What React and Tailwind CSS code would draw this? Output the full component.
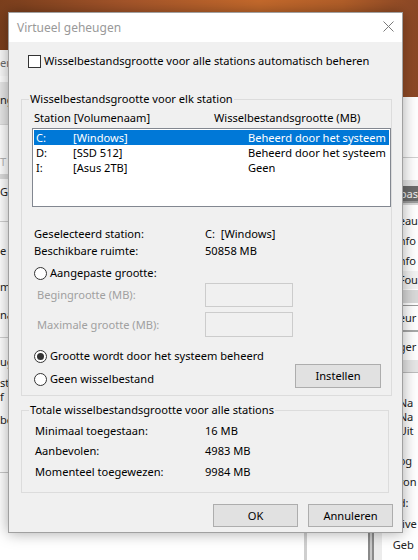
import React from "react";

function Check() {
  return <span className="w-[13px] h-[13px] border border-[#333] bg-white shrink-0" />;
}

function Radio({ on }) {
  return (
    <span className="w-[13px] h-[13px] rounded-full border border-[#333] bg-white shrink-0 flex items-center justify-center">
      {on && <span className="w-[7px] h-[7px] rounded-full bg-[#333]" />}
    </span>
  );
}

function Btn({ children, className }) {
  return (
    <div className={"h-[23px] w-[85px] bg-[#e1e1e1] border border-[#adadad] flex items-center justify-center " + (className || "")}>
      {children}
    </div>
  );
}

const drives = [
  ["C:", "[Windows]", "Beheerd door het systeem", true],
  ["D:", "[SSD 512]", "Beheerd door het systeem", false],
  ["I:", "[Asus 2TB]", "Geen", false],
];

function LeftWindow() {
  return (
    <div className="absolute left-0 top-[50px] w-[307px] h-[510px] bg-white border-r-[3px] border-[#cfcfcf] flex flex-col text-[#222] leading-[16px]">
      <div className="h-[26px] bg-[#fafafa] flex items-center text-[#6d6d6d]">en</div>
      <div className="h-[6px]" />
      <div className="h-[43px] bg-[#e8e8e8] pt-[10px] border-b border-[#dadada]">ng</div>
      <div className="h-[29px]" />
      <div className="h-[16px] text-[#b5b5b5]">T F</div>
      <div className="h-[4px]" />
      <div className="h-[5px] bg-[#dcdcdc]" />
      <div className="h-[5px]" />
      <div className="h-[16px]">G</div>
      <div className="h-[21px]" />
      <div className="h-[1px] bg-[#d0d0d0]" />
      <div className="h-[21px]" />
      <div className="h-[16px]">e t</div>
      <div className="h-[20px]" />
      <div className="h-[16px]">m</div>
      <div className="h-[12px]" />
      <div className="h-[16px]">na</div>
      <div className="h-[14px]" />
      <div className="h-[1px] bg-[#d0d0d0]" />
      <div className="h-[16px]" />
      <div className="h-[16px]">ug</div>
      <div className="h-[6px]" />
      <div className="h-[14px] leading-[14px]">st</div>
      <div className="h-[14px] leading-[14px]">f <span className="text-[#d9b300]">|</span></div>
      <div className="h-[8px]" />
      <div className="h-[16px]">be</div>
      <div className="h-[44px]" />
      <div className="h-[1px] bg-[#c8c8c8]" />
    </div>
  );
}

function RightWindow() {
  return (
    <div className="absolute left-[310px] top-[97px] right-0 bottom-0 bg-white flex">
      <div className="w-[62px]" />
      <div className="w-[6px] border-x-2 border-[#8a8a8a] bg-[#c8c8c8]" />
      <div className="w-[8px] bg-[#ececec]" />
      <div className="flex-1 flex flex-col leading-[16px] text-[#222] pl-[9px]">
        <div className="h-[60px]" />
        <div className="h-[1px] bg-[#d0d0d0] -ml-[9px]" />
        <div className="h-[22px]" />
        <div className="h-[6px] bg-[#e3e3e3] -ml-[9px]" />
        <div className="h-[15px] bg-[#6b6b6b] text-[#f2f2f2] -ml-[9px] pl-[18px] flex items-center">pas</div>
        <div className="h-[2px] bg-[#9a9a9a] -ml-[9px]" />
        <div className="h-[2px] bg-[#d6d6d6] -ml-[9px]" />
        <div className="h-[8px]" />
        <div className="h-[16px] pl-[8px]">eau</div>
        <div className="h-[4px]" />
        <div className="h-[16px] pl-[8px]">nfo</div>
        <div className="h-[4px]" />
        <div className="h-[16px] pl-[8px]">nfo</div>
        <div className="h-[2px]" />
        <div className="h-[18px] bg-[#f3f3f3] -ml-[9px] pl-[17px] flex items-center">Fou</div>
        <div className="h-[1px]" />
        <div className="h-[13px] bg-[#d9d9d9] -ml-[9px]" />
        <div className="h-[2px]" />
        <div className="h-[1px] bg-[#9a9a9a] -ml-[9px]" />
        <div className="h-[4px]" />
        <div className="h-[16px] pl-[8px]">eur</div>
        <div className="h-[4px]" />
        <div className="h-[2px] bg-[#a8a8a8] -ml-[9px]" />
        <div className="h-[7px]" />
        <div className="h-[16px] pl-[8px]">ger</div>
        <div className="h-[5px]" />
        <div className="h-[12px] bg-[#e6e6e6] -ml-[9px]" />
        <div className="h-[1px] bg-[#bdbdbd] -ml-[9px]" />
        <div className="h-[23px]" />
        <div className="h-[14px] leading-[14px] pl-[8px]">Na</div>
        <div className="h-[14px] leading-[14px] pl-[8px]">Na</div>
        <div className="h-[14px] leading-[14px] pl-[8px]">Uit</div>
        <div className="h-[15px]" />
        <div className="h-[16px] pl-[8px]">og</div>
        <div className="h-[5px]" />
        <div className="h-[16px] pl-[8px]">ron</div>
        <div className="h-[5px]" />
        <div className="h-[16px] pl-[8px]">d:</div>
        <div className="h-[5px]" />
        <div className="h-[16px] pl-[3px]">Nive</div>
        <div className="h-[5px]" />
        <div className="h-[16px] pl-[2px]">Geb</div>
      </div>
    </div>
  );
}

export default function App() {
  return (
    <div className="relative w-[418px] h-[560px] overflow-hidden bg-white font-['Noto_Sans',sans-serif] text-[11.1px]">
      <div className="absolute inset-x-0 top-0 h-[97px] bg-[linear-gradient(90deg,#7b3f1d_0%,#a5552a_30%,#c56a2c_62%,#b35f29_82%,#8a4726_100%)]" />
      <LeftWindow />
      <RightWindow />

      <div className="absolute left-[8px] top-[12px] w-[395px] h-[521px] bg-[#f0f0f0] border border-[#a0a0a0] shadow-[0_0_14px_rgba(0,0,0,0.35)] flex flex-col text-black leading-[16px]">
        <div className="h-[29px] bg-white flex items-center justify-between pl-[8px] pr-[8px]">
          <span className="text-[12px] text-[#999]">Virtueel geheugen</span>
          <svg width="11" height="11" viewBox="0 0 11 11" className="mt-[-2px]">
            <path d="M0.5 0.5L10.5 10.5M10.5 0.5L0.5 10.5" stroke="#7a7a7a" strokeWidth="1" />
          </svg>
        </div>

        <div className="flex flex-col">
          <div className="mt-[11px] h-[16px] pl-[19px] flex items-center gap-[3px]">
            <Check />
            <span>Wisselbestandsgrootte voor alle stations automatisch beheren</span>
          </div>

          <fieldset className="mt-[22px] ml-[12px] w-[368px] h-[305px] border border-[#dcdcdc]">
            <legend className="ml-[7px] px-[1px] leading-[16px]">Wisselbestandsgrootte voor elk station</legend>
            <div className="flex flex-col">
              <div className="mt-[3px] h-[16px] pl-[12px] flex items-center">
                <span className="w-[180px]">Station [Volumenaam]</span>
                <span>Wisselbestandsgrootte (MB)</span>
              </div>
              <div className="mt-[2px] ml-[10px] w-[359px] h-[79px] bg-white border border-[#828790] pt-[1px]">
                {drives.map(([d, n, s, sel]) => (
                  <div
                    key={d}
                    className={
                      "flex h-[15px] items-center pl-[2px] mx-[1px] leading-[15px] " +
                      (sel ? "bg-[#0078d7] text-white" : "")
                    }
                  >
                    <span className="w-[37px]">{d}</span>
                    <span className="w-[175px]">{n}</span>
                    <span>{s}</span>
                  </div>
                ))}
              </div>

              <div className="mt-[19px] h-[16px] pl-[12px] flex items-center">
                <span className="w-[171px]">Geselecteerd station:</span>
                <span>C:&nbsp;&nbsp;[Windows]</span>
              </div>
              <div className="mt-[1px] h-[16px] pl-[12px] flex items-center">
                <span className="w-[171px]">Beschikbare ruimte:</span>
                <span>50858 MB</span>
              </div>

              <div className="mt-[6px] h-[16px] pl-[12px] flex items-center gap-[3px]">
                <Radio />
                <span>Aangepaste grootte:</span>
              </div>
              <div className="mt-[2px] h-[24px] pl-[15px] flex items-center text-[#a0a0a0]">
                <span className="w-[168px]">Begingrootte (MB):</span>
                <span className="w-[88px] h-[24px] border border-[#cccccc] bg-[#f0f0f0]" />
              </div>
              <div className="mt-[5px] h-[25px] pl-[15px] flex items-center text-[#a0a0a0]">
                <span className="w-[168px]">Maximale grootte (MB):</span>
                <span className="w-[88px] h-[25px] border border-[#cccccc] bg-[#f0f0f0]" />
              </div>

              <div className="flex items-start">
                <div className="w-[273px] flex flex-col">
                  <div className="mt-[11px] h-[16px] pl-[12px] flex items-center gap-[3px]">
                    <Radio on />
                    <span>Grootte wordt door het systeem beheerd</span>
                  </div>
                  <div className="mt-[7px] h-[16px] pl-[12px] flex items-center gap-[3px]">
                    <Radio />
                    <span>Geen wisselbestand</span>
                  </div>
                </div>
                <Btn className="mt-[27px] w-[86px] h-[24px]">Instellen</Btn>
              </div>
            </div>
          </fieldset>

          <fieldset className="mt-[6px] ml-[12px] w-[368px] h-[91px] border border-[#dcdcdc]">
            <legend className="ml-[7px] px-[1px] leading-[16px]">Totale wisselbestandsgrootte voor alle stations</legend>
            <div className="flex flex-col pl-[13px]">
              <div className="mt-[5px] h-[16px] flex items-center">
                <span className="w-[170px]">Minimaal toegestaan:</span>
                <span>16 MB</span>
              </div>
              <div className="mt-[4px] h-[16px] flex items-center">
                <span className="w-[170px]">Aanbevolen:</span>
                <span>4983 MB</span>
              </div>
              <div className="mt-[5px] h-[16px] flex items-center">
                <span className="w-[170px]">Momenteel toegewezen:</span>
                <span>9984 MB</span>
              </div>
            </div>
          </fieldset>

          <div className="mt-[11px] pr-[9px] flex justify-end gap-[10px]">
            <Btn>OK</Btn>
            <Btn>Annuleren</Btn>
          </div>
        </div>
      </div>
    </div>
  );
}
